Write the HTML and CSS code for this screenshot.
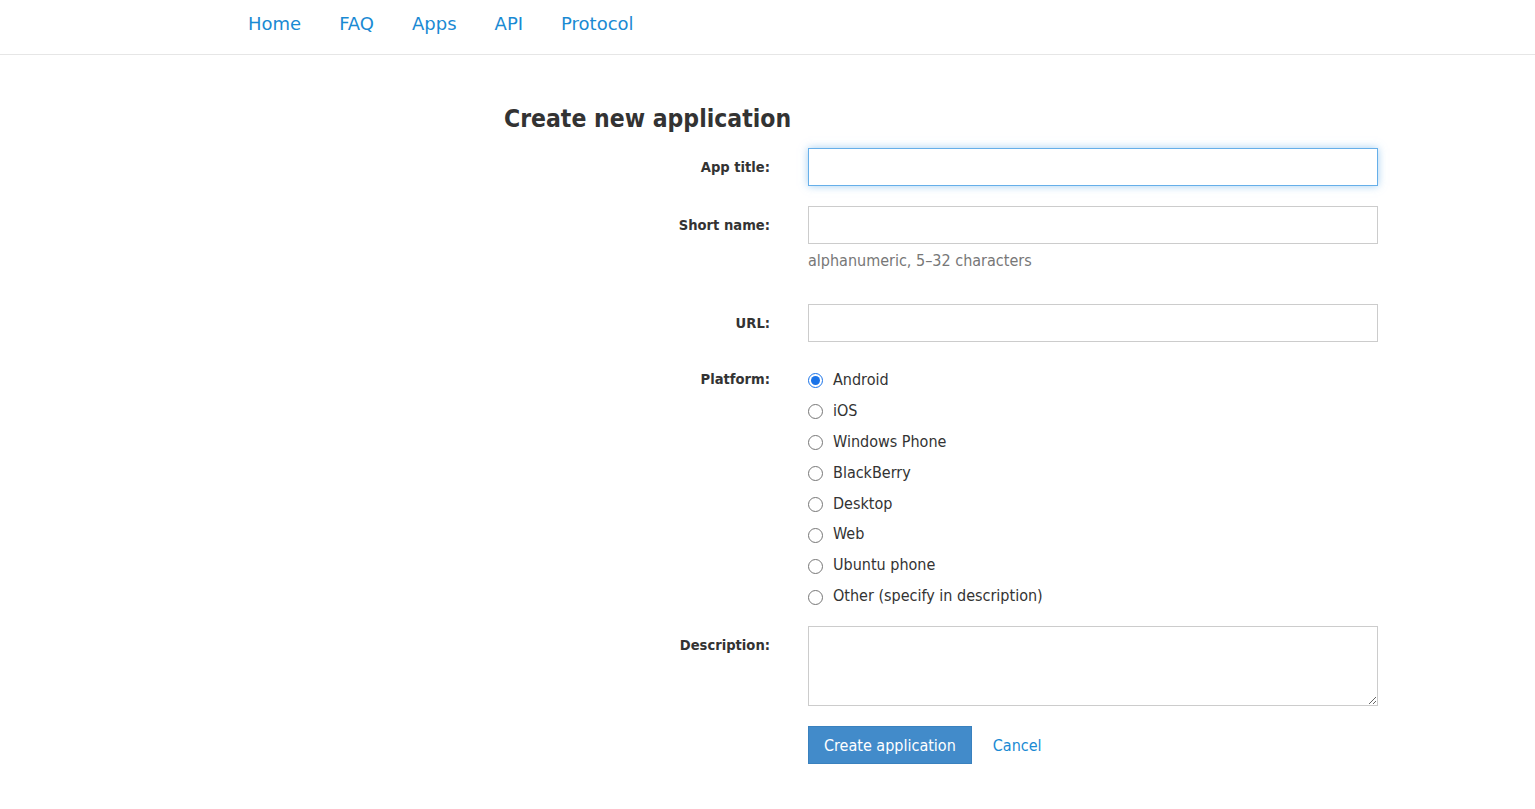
FILE: index.html
```html
<!DOCTYPE html>
<html lang="en">
<head>
  <meta charset="UTF-8">
  <meta name="viewport" content="width=device-width, initial-scale=1">
  <title>Create new application</title>
  <link rel="stylesheet" href="styles.css">
</head>
<body>

  <div class="topbar">
    <nav class="menu">
      <a href="#">Home</a>
      <a href="#">FAQ</a>
      <a href="#">Apps</a>
      <a href="#">API</a>
      <a href="#">Protocol</a>
    </nav>
  </div>

  <div class="content">
    <h1>Create new application</h1>

    <form class="app-form">
      <div class="row">
        <label class="label" for="title">App title:</label>
        <div class="field">
          <input type="text" id="title" class="input focused">
        </div>
      </div>

      <div class="row">
        <label class="label" for="shortname">Short name:</label>
        <div class="field">
          <input type="text" id="shortname" class="input">
          <div class="hint">alphanumeric, 5&ndash;32 characters</div>
        </div>
      </div>

      <div class="row">
        <label class="label" for="url">URL:</label>
        <div class="field">
          <input type="text" id="url" class="input">
        </div>
      </div>

      <div class="row">
        <div class="label label-list">Platform:</div>
        <div class="field radios">
          <label class="radio"><input type="radio" name="platform" checked> Android</label>
          <label class="radio"><input type="radio" name="platform"> iOS</label>
          <label class="radio"><input type="radio" name="platform"> Windows Phone</label>
          <label class="radio"><input type="radio" name="platform"> BlackBerry</label>
          <label class="radio"><input type="radio" name="platform"> Desktop</label>
          <label class="radio"><input type="radio" name="platform"> Web</label>
          <label class="radio"><input type="radio" name="platform"> Ubuntu phone</label>
          <label class="radio"><input type="radio" name="platform"> Other (specify in description)</label>
        </div>
      </div>

      <div class="row">
        <label class="label" for="desc">Description:</label>
        <div class="field">
          <textarea id="desc" class="input textarea"></textarea>
        </div>
      </div>

      <div class="row">
        <div class="label"></div>
        <div class="field actions">
          <button type="button" class="btn">Create application</button>
          <a href="#" class="cancel">Cancel</a>
        </div>
      </div>
    </form>
  </div>

</body>
</html>
```

FILE: styles.css
```css
* {
  box-sizing: border-box;
}

body {
  margin: 0;
  font-family: "DejaVu Sans", Verdana, sans-serif;
  font-stretch: condensed;
  font-size: 16px;
  color: #333;
  background: #fff;
}

a {
  color: #1a8ad3;
  text-decoration: none;
}

.topbar {
  height: 55px;
  border-bottom: 1px solid #e6e6e6;
}

.menu {
  display: flex;
  gap: 38px;
  padding: 11px 0 0 248px;
}

.menu a {
  font-size: 18px;
  font-stretch: normal;
  line-height: 26px;
}

.content {
  padding: 47px 0 40px 504px;
}

h1 {
  margin: 0 0 12px;
  font-size: 24.5px;
  font-weight: 600;
  line-height: 34px;
  color: #333;
}

.row {
  display: flex;
  gap: 38px;
  margin-bottom: 20px;
}

.label {
  width: 266px;
  flex: none;
  text-align: right;
  font-weight: bold;
  font-size: 14.6px;
  line-height: 20px;
  padding-top: 9px;
}

.label-list {
  padding-top: 7px;
}

.field {
  width: 570px;
}

.input {
  display: block;
  width: 100%;
  height: 38px;
  padding: 6px 10px;
  border: 1px solid #ccc;
  border-radius: 0;
  font: inherit;
  outline: none;
}

.focused {
  border-color: #66afe9;
  box-shadow: 0 0 8px rgba(102, 175, 233, 0.6);
}

.hint {
  margin: 7px 0 13px;
  color: #777;
  line-height: 20px;
}

.radios {
  display: flex;
  flex-direction: column;
  margin-top: 2px;
  margin-bottom: -5px;
}

.radio {
  display: flex;
  align-items: center;
  height: 30.9px;
}

.radio input {
  width: 15px;
  height: 15px;
  margin: 3px 10px 0 0;
  accent-color: #1a73e8;
}

.textarea {
  height: 80px;
  resize: vertical;
}

.actions {
  display: flex;
  align-items: center;
  gap: 21px;
}

.btn {
  height: 38px;
  padding: 0 15px;
  background: #428bca;
  border: 1px solid #3a81be;
  color: #fff;
  font: inherit;
  cursor: pointer;
}
```
